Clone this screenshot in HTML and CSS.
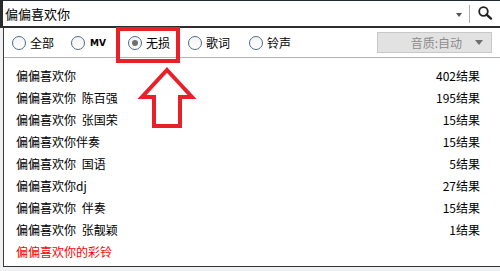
FILE: index.html
```html
<!DOCTYPE html>
<html lang="zh-CN">
<head>
<meta charset="utf-8">
<title>搜索建议</title>
<link rel="stylesheet" href="styles.css">
</head>
<body>
<div class="app">
  <div class="search">
    <span class="query">偏偏喜欢你</span>
    <span class="drop"></span>
    <span class="sep"></span>
    <svg class="search-icon" width="16" height="16" viewBox="0 0 16 16">
      <circle cx="6.5" cy="6.5" r="4.3" fill="none" stroke="#222" stroke-width="1.8"/>
      <line x1="9.6" y1="9.6" x2="14" y2="13.6" stroke="#222" stroke-width="2.4" stroke-linecap="round"/>
    </svg>
  </div>
  <div class="panel">
    <div class="filters">
      <label class="opt o1"><span class="radio"></span>全部</label>
      <label class="opt o2"><span class="radio"></span><span class="mv">MV</span></label>
      <label class="opt o3"><span class="radio checked"></span>无损</label>
      <label class="opt o4"><span class="radio"></span>歌词</label>
      <label class="opt o5"><span class="radio"></span>铃声</label>
      <div class="quality"><span>音质:自动</span><span class="tri"></span></div>
    </div>
    <ul class="list">
      <li><span>偏偏喜欢你</span><span class="num">402结果</span></li>
      <li><span>偏偏喜欢你 陈百强</span><span class="num">195结果</span></li>
      <li><span>偏偏喜欢你 张国荣</span><span class="num">15结果</span></li>
      <li><span>偏偏喜欢你伴奏</span><span class="num">15结果</span></li>
      <li><span>偏偏喜欢你 国语</span><span class="num">5结果</span></li>
      <li><span>偏偏喜欢你dj</span><span class="num">27结果</span></li>
      <li><span>偏偏喜欢你 伴奏</span><span class="num">15结果</span></li>
      <li><span>偏偏喜欢你 张靓颖</span><span class="num">1结果</span></li>
      <li class="red"><span>偏偏喜欢你的彩铃</span></li>
    </ul>
  </div>
  <div class="highlight"></div>
  <svg class="arrow" width="64" height="66" viewBox="0 0 64 66">
    <polygon points="31,4 56,31 44,31 44,60 18,60 18,31 6,31" fill="#fff" stroke="#e8202a" stroke-width="4" stroke-linejoin="miter"/>
  </svg>
</div>
</body>
</html>
```

FILE: styles.css
```css
* { box-sizing: border-box; }
html, body { margin: 0; padding: 0; }
body {
  width: 500px;
  height: 271px;
  overflow: hidden;
  background: #eef0f2;
  font-family: "Noto Sans CJK SC", "Noto Sans", sans-serif;
  font-size: 12px;
  color: #000;
}
.app { position: relative; width: 500px; height: 271px; }

.search {
  height: 28px;
  background: #fff;
  border-top: 1px solid #1f2a35;
  border-left: 3px solid #2a2a2a;
  border-bottom: 2px solid #2e2e2e;
  display: flex;
  align-items: center;
  padding-left: 2px;
}
.query { font-size: 13px; line-height: 25px; flex: 1; }
.drop {
  width: 0; height: 0;
  border-left: 3.5px solid transparent;
  border-right: 3.5px solid transparent;
  border-top: 4px solid #555;
  margin-right: 7px;
  margin-top: 2px;
}
.sep { width: 1px; height: 18px; background: #b0b0b0; margin-right: 7px; }
.search-icon { margin-right: 7px; margin-top: -2px; }

.panel {
  margin-left: 3px;
  background: #fff;
  border-left: 1px solid #3a3a3a;
  border-bottom: 1px solid #333;
}
.filters {
  height: 30px;
  border-bottom: 1px solid #b4b4b4;
  display: flex;
  align-items: center;
  padding-left: 8px;
  padding-right: 8px;
}
.opt { display: flex; align-items: center; gap: 4px; font-size: 12px; }
.o1 { width: 59px; }
.o2 { width: 57px; gap: 5px; }
.o3 { width: 60px; }
.o4 { width: 61px; }
.radio {
  width: 14px; height: 14px;
  border-radius: 50%;
  border: 1px solid #4f6c88;
  background: linear-gradient(#f4f4f4, #fff);
  display: flex; align-items: center; justify-content: center;
}
.radio.checked::after {
  content: "";
  width: 6px; height: 6px;
  border-radius: 50%;
  background: #707070;
}
.mv { font-family: "DejaVu Sans", sans-serif; font-size: 9px; font-weight: bold; }
.quality {
  margin-left: auto;
  width: 115px;
  height: 21px;
  background: #e2e2e2;
  border: 1px solid #c8c8c8;
  color: #8c8c8c;
  display: flex;
  align-items: center;
  justify-content: flex-end;
  padding-right: 8px;
  gap: 13px;
}
.tri {
  width: 0; height: 0;
  border-left: 4.5px solid transparent;
  border-right: 4.5px solid transparent;
  border-top: 5px solid #6e6e6e;
}

.list {
  list-style: none;
  margin: 0;
  padding: 7px 20px 3px 12px;
}
.list li {
  height: 22px;
  line-height: 22px;
  display: flex;
  justify-content: space-between;
  word-spacing: 3px;
}
.list li.red { color: #ff0000; }

.highlight {
  position: absolute;
  left: 116px; top: 27px;
  width: 64px; height: 36px;
  border: 4px solid #e8202a;
}
.arrow {
  position: absolute;
  left: 136px; top: 66px;
}
```
